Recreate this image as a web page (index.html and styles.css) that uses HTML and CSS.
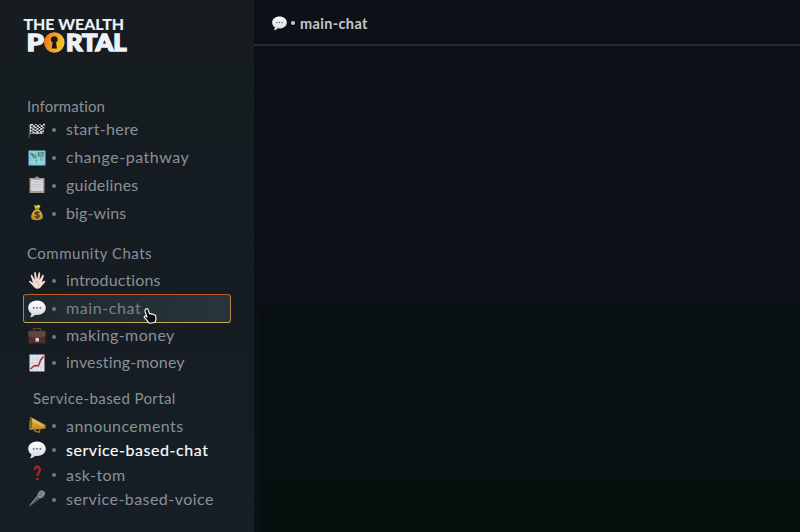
FILE: index.html
```html
<!DOCTYPE html>
<html lang="en">
<head>
<meta charset="utf-8">
<title>The Wealth Portal</title>
<link rel="stylesheet" href="styles.css">
</head>
<body>
<svg class="defs" aria-hidden="true">
  <defs>
    <linearGradient id="coin" x1="0" x2="1" y1="0" y2=".2"><stop offset="0" stop-color="#e96f18"/><stop offset=".5" stop-color="#f6a01d"/><stop offset="1" stop-color="#f2c32b"/></linearGradient>
    <linearGradient id="gold" x1="0" x2="0" y1="0" y2="1"><stop offset="0" stop-color="#e8c74e"/><stop offset="1" stop-color="#bd8421"/></linearGradient>
    <linearGradient id="bubbleFill" x1="0" x2="0" y1="0" y2="1"><stop offset="0" stop-color="#fff"/><stop offset="1" stop-color="#d4d8dd"/></linearGradient>
    <symbol id="bubble" viewBox="0 0 18 18"><path d="M9 .5C4.300.5.2 3.500.2 7.800c0 2.500 1.300 4.500 3.300 5.700-.1 1.500-.8 2.700-1.700 3.700 2.200.1 4.100-.9 5.200-2.400.6.1 1.300.2 2 .2 4.900 0 8.800-3 8.800-7.200S13.800.5 9 .5z" fill="url(#bubbleFill)"/><g fill="#596067"><circle cx="5.700" cy="7.800" r=".9"/><circle cx="9" cy="7.800" r=".9"/><circle cx="12.300" cy="7.800" r=".9"/></g></symbol>
  </defs>
</svg>
<div class="app">
  <aside class="sidebar">
    <svg class="logo" viewBox="0 0 108 38" role="img" aria-label="The Wealth Portal">
      <g class="logo-text">
        <text class="logo-top" x="0.500" y="12" textLength="100.500" lengthAdjust="spacingAndGlyphs">THE WEALTH</text>
        <text class="logo-main" x="3.700" y="32.600" textLength="17" lengthAdjust="spacingAndGlyphs">P</text>
        <text class="logo-main" x="43" y="32.600" textLength="60.500" lengthAdjust="spacingAndGlyphs">RTAL</text>
      </g>
      <circle cx="31.300" cy="24.500" r="10.300" fill="url(#coin)"/>
      <path d="M31.300 18.200a3.300 3.300 0 0 0-1.700 6.200l-1 6h5.400l-1-6a3.300 3.300 0 0 0-1.700-6.200z" fill="#17191b"/>
    </svg>

    <nav>
      <section class="group info">
        <h2>Information</h2>
        <a class="row"><svg class="icon" viewBox="0 0 18 18"><path d="M1.300 3v14" stroke="#66635f"/><path d="M2 3.500c4-1.500 6 1 15-.8l-1.500 9.500c-6 1.600-9-.7-13.500.8z" fill="#eee"/><path d="M3 5.500q6-1.500 14 0M2.500 8.500q6-1.500 14 0M2.500 11.500q6-1.500 13 0" fill="none" stroke="#171a1c" stroke-width="1.700" stroke-dasharray="2 2"/><path d="M5 3.800q6-.7 12 0M4.500 7q6-1.500 12 0M4.500 10q6-1.500 11 0" fill="none" stroke="#171a1c" stroke-width="1.300" stroke-dasharray="2 2"/></svg><i></i><span class="label start">start-here</span></a>
        <a class="row"><svg class="icon" viewBox="0 0 18 18"><path d="M.5 1.500h17v15H.5z" fill="#83c8dc"/><path d="M2 4l5 1 2 3-3 2-2-3zM10 3l6 .5-1 4-3 1-2-2z" fill="#327d79"/><path d="M7 5l3 2-2 2zM12 5l3-1-1 4z" fill="#a9ae37"/><path d="M6 2v14M12 2v14M1 13h16" stroke="#b5e2ed" stroke-width=".7"/><path d="M7 10l2 1-1 3zM12 9l2 1-1 3z" fill="#51a45d"/></svg><i></i><span class="label change">change-pathway</span></a>
        <a class="row"><svg class="icon" viewBox="0 0 18 18"><path d="M1.500 2h15v15h-15z" fill="#a79c92"/><path d="M3 3.500h12V15H3z" fill="#d5d4d7"/><path d="M5 6h8M5 8.500h8M5 11h8" stroke="#bdbdc3" stroke-width=".7"/><path d="M6 3.500V1.800h1.500C7.500 0 10.500 0 10.500 1.800H12v1.700z" fill="#92979b"/></svg><i></i><span class="label guide">guidelines</span></a>
        <a class="row"><svg class="icon" viewBox="0 0 18 18"><path d="M6 1l2 .7L10 .8l2.500.8-1.700 3.900c3 2 4.200 5 4 8.300-.2 3-11.400 3.700-11.600 0-.2-3.500 1.500-6.500 4.200-8.300z" fill="url(#gold)"/><path d="M6.700 5h4.600" stroke="#876b24" stroke-width="1.200"/><path d="M11.500 9c-1-1.200-4.500-1.200-4.500.5 0 1.800 4.500.6 4.500 2.600 0 1.700-3.700 1.700-4.800.3M9.200 7v8" fill="none" stroke="#443815" stroke-width="1.200"/></svg><i></i><span class="label wins">big-wins</span></a>
      </section>

      <section class="group community">
        <h2>Community Chats</h2>
        <a class="row"><svg class="icon" viewBox="0 0 18 18"><path d="M7 17L1.200 11c-.8-1 .3-1.700 1.200-1.100L5 12 2.800 4.800c-.3-1.200 1.200-1.500 1.600-.4L6.800 9 6.200 2c0-1.200 1.500-1.300 1.700-.1L9 8.500 10.600 2c.3-1.200 1.800-.9 1.600.3L11.500 9l2.800-4.800c.6-1 1.900-.4 1.500.7L13.900 11l2.200-1.300c1-.3 1.700.6 1 1.300L13 16c-1.500 2-4.500 2.300-6 1z" fill="#f2dcd1"/><path d="M7 11q4-1 4 4" fill="none" stroke="#cba99b" stroke-width=".7"/></svg><i></i><span class="label intro">introductions</span></a>
        <a class="row selected"><svg class="icon"><use href="#bubble"/></svg><i></i><span class="label main">main-chat</span>
          <svg class="cursor" viewBox="0 0 16 18"><path d="M3 1.500C4.200.7 5.200 1.500 5.600 2.700L7 6.800c.8-.8 1.900-.3 2.200.4.900-.7 1.900-.1 2.200.6 1-.5 2 .2 2.100 1.100l.3 4.300-1.300 2.700-6 .8-2.200-3-2.800-3c-.7-1.200.6-2.200 1.700-1.400l1 .8-2-6.200c-.2-.9 0-1.700.8-2.400z" fill="#080b0d" stroke="#fff" stroke-width="1.200" stroke-linejoin="round"/></svg></a>
        <a class="row short"><svg class="icon" viewBox="0 0 18 18"><path d="M5.500 4V1.500h7V4" fill="none" stroke="#564744" stroke-width="1.200"/><rect x=".5" y="3.500" width="17" height="13" rx="1" fill="#4b302b"/><path d="M.5 4.500h17V9q-8.500 4-17 0z" fill="#65443c"/><rect x="7.500" y="11" width="3.500" height="3.500" rx=".5" fill="#e2d4c5"/></svg><i></i><span class="label making">making-money</span></a>
        <a class="row short"><svg class="icon" viewBox="0 0 18 18"><path d="M1.500.5h15v17h-15z" fill="#e0e5eb"/><path d="M2 5h14M2 9h14M2 13h14M5 1v16M9 1v16M13 1v16" stroke="#c4ced8" stroke-width=".6"/><path d="M2.500 15l4-3.500 4 .2 2-5.500 3-4" fill="none" stroke="#b42831" stroke-width="1.500"/></svg><i></i><span class="label invest">investing-money</span></a>
      </section>

      <section class="group service">
        <h2>Service-based Portal</h2>
        <a class="row"><svg class="icon" viewBox="0 0 18 18"><path d="M2.500 1L17.500 9v3.500L1.500 14z" fill="url(#gold)"/><ellipse cx="2.700" cy="7.500" rx="1.600" ry="6.300" transform="rotate(5 2.700 7.500)" fill="#8d6721"/><path d="M7 13v2.300l4 .8 1-3" fill="none" stroke="#a7771f" stroke-width="1.400"/><path d="M4 4l11 6" stroke="#f2dc82" stroke-width=".8"/></svg><i></i><span class="label announce">announcements</span></a>
        <a class="row active"><svg class="icon"><use href="#bubble"/></svg><i></i><span class="label chat">service-based-chat</span></a>
        <a class="row"><svg class="icon" viewBox="0 0 18 18"><path d="M6.700 5c0-4.500 5.300-4 5.200-.5-.1 2.800-2.400 3-2.400 6.500" fill="none" stroke="#b51f2b" stroke-width="2.300"/><circle cx="9.300" cy="14" r="1.500" fill="#b51f2b"/></svg><i></i><span class="label ask">ask-tom</span></a>
        <a class="row"><svg class="icon" viewBox="0 0 18 18"><path d="M9.700 5l3 3L2 16.500 1 15.500z" fill="#555c62"/><path d="M9.500 6L3 14" stroke="#a0a5a8" stroke-width=".8"/><ellipse cx="13.200" cy="4.300" rx="3.300" ry="4" transform="rotate(40 13.200 4.300)" fill="#8f9497"/><path d="M10.300 3.500l5 4M12 1.500l4 4M11 6l4-5" stroke="#4c5256" stroke-width=".6"/></svg><i></i><span class="label voice">service-based-voice</span></a>
      </section>
    </nav>
  </aside>
  <main class="content">
    <header class="channel"><svg class="icon" viewBox="0 0 18 18"><use href="#bubble" width="18" height="18"/></svg><i></i><h1>main-chat</h1></header>
    <div class="messages"></div>
  </main>
</div>
</body>
</html>
```
FILE: styles.css
```css
* { box-sizing: border-box; }
body { margin: 0; background: #0b1117; font-family: Lato, "Open Sans", sans-serif; color: #8b9095; }
.defs { position: absolute; width: 0; height: 0; }
.app { display: grid; grid-template-columns: 254px 1fr; height: 532px; overflow: hidden; }
.sidebar { padding: 18px 23px 0; background: linear-gradient(#161c20, #151c22 55%, #161e27); }
.logo { display: block; width: 108px; height: 38px; overflow: visible; }
.logo-text { fill: #eef1f7; stroke: #eef1f7; }
.logo-top { font-size: 15px; font-weight: 700; stroke-width: .2px; }
.logo-main { font-size: 23px; font-weight: 900; stroke-width: 1.500px; }
nav { padding-top: 39px; }
h1, h2 { margin: 0; font-weight: 400; }
h2 { height: 22px; padding-left: 4px; font-size: 15px; line-height: 22px; white-space: nowrap; }
.row { position: relative; display: flex; align-items: center; height: 28px; padding-left: 4.500px; font-size: 16px; white-space: nowrap; }
.icon { flex: none; width: 18px; height: 18px; }
i { flex: none; width: 4px; height: 4px; border-radius: 50%; background: #747a7f; margin: 1px 10px 0 6.500px; }
.label { line-height: 24px; padding-bottom: 1px; }
.group { height: 147px; }
.info h2 { height: 21px; letter-spacing: .1px; }
.info .row { height: 27.800px; }
.community { height: 145px; }
.community h2 { height: 24px; letter-spacing: .5px; }
.selected { height: 29px; padding-left: 3.500px; border: 1px solid; border-color: #b75b2a #b28348 #c3a656; border-radius: 3px; width: 208px; background: linear-gradient(100deg, #1d282d, #28353a); color: #7b8286; }
.short { height: 26.500px; }
.short .label { padding-bottom: 2px; }
.cursor { position: absolute; left: 119px; top: 12px; width: 15px; height: 18px; }
.service h2 { height: 26px; padding-left: 10px; letter-spacing: .4px; }
.service .row { height: 24.600px; }
.service .label { padding: 1px 0 0; }
.service .row:last-child .label { padding: 0; }
.active { color: #fff; }
.start { letter-spacing: .3px; }
.change { letter-spacing: .52px; }
.guide { letter-spacing: .2px; }
.wins, .intro { letter-spacing: .12px; }
.main { letter-spacing: .6px; }
.making { letter-spacing: .4px; }
.invest { letter-spacing: .15px; }
.announce, .ask, .voice { letter-spacing: .45px; }
.chat { letter-spacing: .55px; -webkit-text-stroke: .12px #fff; }
.content { display: grid; grid-template-rows: 46px 1fr; }
.channel { display: flex; align-items: center; padding: 2px 0 0 18px; border-bottom: 2px solid #252b2f; }
.channel .icon { width: 15px; height: 15px; }
.channel i { margin: 0 5px 0 4px; background: #c5c9cc; }
h1 { font-size: 14.500px; font-weight: 700; line-height: 20px; letter-spacing: .35px; color: #c5c9cc; padding-top: 2px; }
.messages { background: linear-gradient(#0b1117 0 261px, #091012 261px 428px, #07100f 428px); margin-left: 6px; }
```
